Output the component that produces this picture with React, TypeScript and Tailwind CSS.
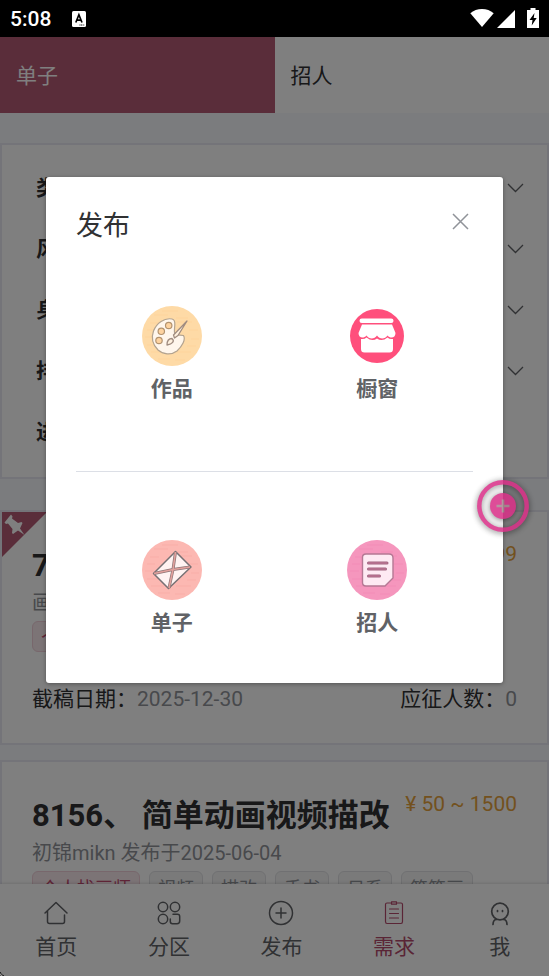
import type { ReactNode } from 'react';

function StatusBar() {
  return (
    <header className="flex h-[37px] shrink-0 items-center bg-black pl-[10px] pr-[10px] text-white">
      <span className="font-[Roboto] text-[21px] font-medium leading-6">5:08</span>
      <svg className="ml-[21px]" width="14" height="16" viewBox="0 0 14 16" aria-hidden="true">
        <rect width="14" height="16" rx="1.5" fill="#fff" />
        <path d="M3.8 11.5 6.9 3.8 10 11.5M4.8 9.2h4.2" stroke="#000" strokeWidth="1.7" fill="none" />
        <path d="M7.5 14h5" stroke="#000" strokeWidth="1" strokeDasharray="1 .6" />
      </svg>
      <svg className="mb-[2px] ml-auto" width="24" height="20" viewBox="0 0 24 20" aria-hidden="true">
        <path d="M.3 5.2C3.5 2.6 7.500 1 12 1s8.500 1.600 11.700 4.200L12 19Z" fill="#fff" />
      </svg>
      <svg className="ml-[3px]" width="18" height="18" viewBox="0 0 18 18" aria-hidden="true">
        <path d="M18 0v18H0Z" fill="#fff" />
      </svg>
      <svg className="mb-[2px] ml-[12px]" width="12" height="20" viewBox="0 0 12 20" aria-hidden="true">
        <path d="M3.500 0h5v2H12v18H0V2h3.500Z" fill="#fff" />
        <path d="M7.500 5 2.500 12h3L4.700 17.500 9.700 10h-3Z" fill="#000" />
      </svg>
    </header>
  );
}

const filters = [
  { name: '类型', open: true },
  { name: '风格', open: true },
  { name: '身份', open: true },
  { name: '排序', open: true },
  { name: '进度', open: false },
];

function Filters() {
  return (
    <section className="mt-[30px] border-2 border-[#e8e8f2] bg-white pb-[15px] pl-[34px] pr-[23px] pt-[12px]">
      {filters.map((f) => (
        <button key={f.name} type="button" className="flex h-[61px] w-full items-center justify-between text-[21px] font-bold text-[#303133]">
          <span className="pt-[2px]">{f.name}</span>
          {f.open && (
            <svg width="17" height="10" viewBox="0 0 17 10" fill="none" stroke="#606266" strokeWidth="1.300" aria-hidden="true">
              <path d="m1 1 7.500 7.500L16 1" />
            </svg>
          )}
        </button>
      ))}
    </section>
  );
}

type Job = {
  title: string;
  price: string;
  author: string;
  tags: string[];
  pinned?: boolean;
  deadline?: string;
  applicants?: number;
};

const jobs: Job[] = [
  {
    title: '7982、 角色立绘',
    price: '¥ 100 ~ 999',
    author: '画师 发布于2025-06-04',
    tags: ['个人找画师'],
    pinned: true,
    deadline: '2025-12-30',
    applicants: 0,
  },
  {
    title: '8156、 简单动画视频描改',
    price: '¥ 50 ~ 1500',
    author: '初锦mikn 发布于2025-06-04',
    tags: ['个人找画师', '视频', '描改', '手书', '日系', '简笔画'],
  },
];

function JobCard({ job }: { job: Job }) {
  return (
    <article className="relative shrink-0 border-2 border-[#e8e8f2] bg-white px-[30px] pb-[32px] pt-[30px]">
      {job.pinned && (
        <svg className="absolute left-0 top-0" width="45" height="45" viewBox="0 0 45 45" aria-hidden="true">
          <path d="M0 0h45L0 45Z" fill="#b45a74" />
          <path d="m9 2.500 1.500 2-.5 2 6 4.500 3.500-1 1 1-2.500 5.500 4.500 6.500-6.500-4.500-5 3.500-1-1 .5-4-4.500-5.500-2 .5-1.500-1.500Z" fill="#fff" />
        </svg>
      )}
      <div className="flex items-start justify-between">
        <h2 className="whitespace-nowrap text-[31px] font-bold leading-[48px] text-[#303133]">{job.title}</h2>
        <span className="whitespace-nowrap text-[21px] leading-6 text-[#e6a23c]">{job.price}</span>
      </div>
      <p className="mt-px text-[20px] leading-6 text-[#909399]">{job.author}</p>
      <ul className="mt-[6px] flex gap-[9px]">
        {job.tags.map((tag, i) => (
          <li
            key={tag}
            className={
              'flex h-[31px] items-center whitespace-nowrap rounded-md border px-2 pt-[3px] text-[18px] ' +
              (i === 0 ? 'border-[#f0cfd8] bg-[#f8e8ed] text-[#c04a70]' : 'border-[#e0e1e4] bg-[#f4f4f5] text-[#909399]')
            }
          >
            {tag}
          </li>
        ))}
      </ul>
      {job.deadline && (
        <div className="mt-[35px] flex justify-between text-[21px] leading-6 text-[#303133]">
          <span>截稿日期：<span className="text-[#909399]">{job.deadline}</span></span>
          <span>应征人数：<span className="text-[#909399]">{job.applicants}</span></span>
        </div>
      )}
    </article>
  );
}

function NavItem({ label, active, children }: { label: string; active?: boolean; children: ReactNode }) {
  return (
    <a href="#" className={'flex grow flex-col items-center gap-[2px] pt-[15px] text-[21px] leading-[36px] ' + (active ? 'text-[#b44a6c]' : 'text-[#606266]')}>
      <svg width="28" height="28" viewBox="0 0 28 28" fill="none" stroke="currentColor" strokeWidth="1.500" strokeLinecap="round" strokeLinejoin="round" aria-hidden="true">
        {children}
      </svg>
      {label}
    </a>
  );
}

function BottomNav() {
  return (
    <nav className="relative flex h-[92px] shrink-0 bg-white shadow-[0_0_4px_rgba(0,0,0,0.2)]">
      <NavItem label="首页">
        <path d="M3 14 14 3.500 25 14M5.500 12v10.500q0 2 2 2h13q2 0 2-2V16" />
      </NavItem>
      <NavItem label="分区">
        <circle cx="8" cy="8" r="4.700" />
        <circle cx="20" cy="8" r="4.700" />
        <circle cx="8" cy="20" r="4.700" />
        <path d="M18 15.300h4.500q2.200 0 2.200 2.200V22q0 2.700-2.700 2.700h-4.500q-2.200 0-2.200-2.200V20" />
      </NavItem>
      <NavItem label="发布">
        <circle cx="14" cy="14" r="11.500" />
        <path d="M14 9v10M9 14h10" />
      </NavItem>
      <NavItem label="需求" active>
        <path d="M10.500 4H7Q5.500 4 5.500 5.500v17Q5.500 24.500 7 24.500h14q1.500 0 1.500-2v-17Q22.500 4 21 4h-3.500M11.500 2.800h5v2.400h-5ZM9.500 10h9M9.500 14.500h9M9.500 19h9" strokeWidth="1.200" />
      </NavItem>
      <NavItem label="我">
        <circle cx="14" cy="12.500" r="8.300" strokeWidth="1.700" />
        <path d="M11.500 11.500v1M16.500 11.500v1M10.500 20.500q-3.300 0-3.500 5M17.500 20.500q3.300 0 3.500 5" strokeWidth="1.700" />
      </NavItem>
    </nav>
  );
}

function Grain({ color }: { color: string }) {
  return (
    <path
      d="M12 9h14m8 3h12M8 17h9m18-1h15M5 24h8m34 0h9M3 31h9m37 2h8M5 39h11m29 1h9M9 46h13m12 0h15M16 53h12m5 1h10M20 5h16"
      stroke={color}
      strokeWidth="1"
      opacity=".4"
    />
  );
}

function PaletteIcon() {
  return (
    <svg width="60" height="60" viewBox="0 0 60 60" aria-hidden="true">
      <circle cx="30" cy="30" r="30" fill="#fedaa6" />
      <Grain color="#fcca8c" />
      <path d="M30 13c2.500.5 3 3 2.800 6-.2 4-1 7 .2 9 1.500 2 5 .5 8.500 1.500 2.500 4-1.500 11-6.500 15.500-6 4.500-14 3.500-19-1-5-5-7-12-4.500-19 3-8 11-13.500 18.500-12Z" fill="#fff6ec" stroke="#b3a38f" strokeWidth="1.200" />
      <g fill="#fed3a0" stroke="#b3936f" strokeWidth="1.200">
        <circle cx="26.700" cy="19.500" r="3.200" />
        <circle cx="19.300" cy="25.300" r="3.200" />
        <circle cx="17" cy="34.500" r="3.200" />
      </g>
      <path d="M45 15 31.500 29l1 3L36 29.500ZM25 39c0-4 2-6.500 5-6.500 3 2.500.5 5.500-5 6.500Z" fill="#fff1df" stroke="#a08c80" strokeWidth="1.300" strokeLinejoin="round" />
    </svg>
  );
}

function ShopIcon() {
  return (
    <svg width="60" height="60" viewBox="0 0 60 60" aria-hidden="true">
      <circle cx="30" cy="30" r="27" fill="#ff4f7c" />
      <rect x="12.500" y="12.500" width="34" height="4.500" rx="2.250" fill="#fff" />
      <path d="M15 18.500h30l3.500 8.500c0 5-5 6-8 2.500-2.500 4-8 4-10.500 0-2.500 4-8 4-10.500 0-3 3.500-8 2.500-8-2.500Z" fill="#fff" />
      <path d="M14 33q3.500 .5 5.500-1.500 5.500 4.500 10.500 1 5 3.500 10.500-1 2 2 5.500 1.500V43q0 3.500-3.500 3.500h-25Q14 46.500 14 43Z" fill="#fff" />
    </svg>
  );
}

function EnvelopeIcon() {
  return (
    <svg width="60" height="60" viewBox="0 0 60 60" aria-hidden="true">
      <circle cx="30" cy="30" r="30" fill="#fcb8b2" />
      <Grain color="#f59f9c" />
      <path d="M33.500 11.500 49 27 26.500 48.500 11.500 33.500Z" fill="#fff3f2" stroke="#777174" strokeWidth="1.500" strokeLinejoin="round" />
      <path d="M33.500 12 31 29.500 48 27M12 33.500 31 29.500 27 48" fill="none" stroke="#8d7677" strokeWidth="3" strokeLinejoin="round" />
      <path d="M33.500 12 31 29.500 48 27M12 33.500 31 29.500 27 48" fill="none" stroke="#e2a09c" strokeWidth="1.600" strokeLinejoin="round" />
    </svg>
  );
}

function NoteIcon() {
  return (
    <svg width="60" height="60" viewBox="0 0 60 60" aria-hidden="true">
      <circle cx="30" cy="30" r="30" fill="#f596bd" />
      <Grain color="#ee7fae" />
      <path d="M19 14h23q4 0 4 4v20l-8 8H19q-3.500 0-3.500-3.500v-25Q15.500 14 19 14Z" fill="#feeaf3" stroke="#b57894" strokeWidth="1.400" />
      <path d="M21.500 23h18.500M21.500 29h17M21.500 36h11" stroke="#a0647f" strokeWidth="3" strokeLinecap="round" />
      <path d="M21.500 23h18.500M21.500 29h17M21.500 36h11" stroke="#c87b9c" strokeWidth="1.200" strokeLinecap="round" />
    </svg>
  );
}

function Choice({ label, children }: { label: string; children: ReactNode }) {
  return (
    <button type="button" className="flex flex-col items-center gap-2 text-[21px] font-bold leading-[30px] text-[#606266]">
      {children}
      {label}
    </button>
  );
}

function PublishDialog() {
  return (
    <div role="dialog" aria-modal="true" aria-labelledby="publish-title" className="mx-auto mt-[177px] w-[457px] max-w-[84%] rounded-[3px] bg-white px-[30px] pb-[45px] pt-[30px] shadow-[0_1px_4px_rgba(0,0,0,0.35)]">
      <div className="flex items-start justify-between">
        <h1 id="publish-title" className="text-[27px] leading-[38px] text-[#303133]">发布</h1>
        <button type="button" aria-label="关闭" className="mr-1 pt-[6px]">
          <svg width="17" height="17" viewBox="0 0 17 17" stroke="#909399" strokeWidth="1.500" aria-hidden="true">
            <path d="m1 1 15 15M16 1 1 16" />
          </svg>
        </button>
      </div>
      <div className="-mx-[7px] mt-[61px] grid grid-cols-2">
        <Choice label="作品"><PaletteIcon /></Choice>
        <Choice label="橱窗"><ShopIcon /></Choice>
      </div>
      <hr className="mb-[68px] mt-[67px] border-[#dcdfe6]" />
      <div className="-mx-[7px] grid grid-cols-2">
        <Choice label="单子"><EnvelopeIcon /></Choice>
        <Choice label="招人"><NoteIcon /></Choice>
      </div>
    </div>
  );
}

export default function App() {
  return (
    <div className="relative flex h-screen flex-col overflow-hidden bg-[#f6f9fc] font-[Roboto,'Noto_Sans_CJK_SC',sans-serif]">
      <StatusBar />
      <div className="grid h-[76px] shrink-0 grid-cols-2 text-[21px]">
        <button type="button" className="bg-[#b45a74] pl-4 pt-1 text-left text-white">单子</button>
        <button type="button" className="bg-white pl-4 pt-1 text-left text-[#303133]">招人</button>
      </div>
      <main className="min-h-0 flex-1 overflow-hidden">
        <Filters />
        <div className="mt-[31px] flex flex-col gap-[15px]">
          {jobs.map((job) => (
            <JobCard key={job.title} job={job} />
          ))}
        </div>
      </main>
      <BottomNav />

      <div className="absolute inset-x-0 bottom-0 top-[37px] bg-black/50" />
      <div className="absolute inset-0">
        <PublishDialog />
      </div>

      <button type="button" aria-label="新建" className="absolute right-[20px] top-[480px] opacity-85">
        <svg className="overflow-visible drop-shadow-[0_1px_3px_rgba(0,0,0,0.6)]" width="52" height="52" viewBox="0 0 52 52" aria-hidden="true">
          <circle cx="26" cy="26" r="23.700" fill="none" stroke="#d92f87" strokeWidth="4.500" />
          <circle cx="26" cy="26" r="13" fill="#d92f87" />
          <path d="M26 19.500v13M19.500 26h13" stroke="#a9868f" strokeWidth="2.600" />
        </svg>
      </button>
      <svg className="absolute bottom-0 left-0" width="5" height="5" viewBox="0 0 5 5" aria-hidden="true">
        <path d="M0 1q1 3 4 4H0Z" fill="#fff" stroke="#000" strokeWidth=".8" />
      </svg>
    </div>
  );
}
